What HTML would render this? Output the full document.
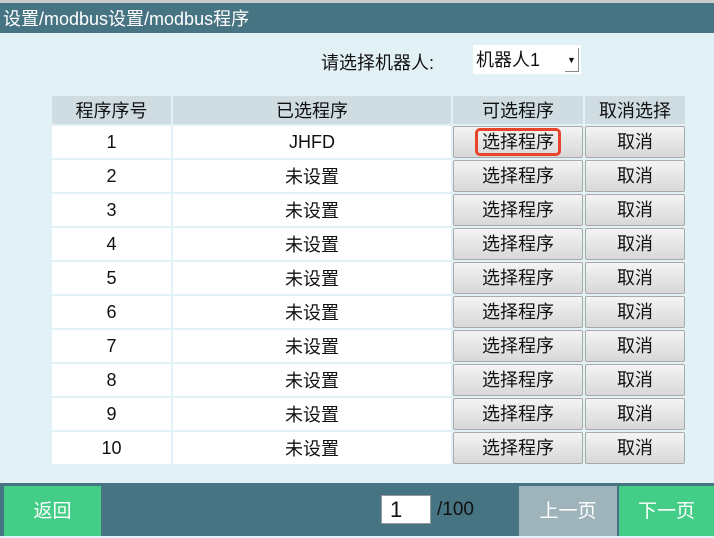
<!DOCTYPE html><html><head><meta charset="utf-8"><style>
*{margin:0;padding:0;box-sizing:border-box}
body{width:714px;height:536px;overflow:hidden;background:#e1f1f6;font-family:"Liberation Sans","Noto Sans CJK SC",sans-serif;position:relative;color:#111}
.a{position:absolute}
.hdr{left:0;top:3px;width:714px;height:30px;background:#477483;color:#fff;font-size:18px;line-height:32px;padding-left:3px}
table{position:absolute;left:52px;top:96px;border-collapse:separate;border-spacing:2px;margin:-2px}
td{height:32px;text-align:center;font-size:18px;background:#fff;padding:0}
tr.h td{background:#cfdde2;height:28px}
td.b{background:transparent;padding:0}
.btn{height:32px;border:1px solid #aaa;border-radius:2px;background:linear-gradient(#f4f4f4,#d8d8d8);line-height:31px;font-size:18px}
.foot{left:0;top:483px;width:714px;height:53px;background:#477483}
.g{background:#43cd86;color:#fff;font-size:19px;text-align:center;line-height:52px}
</style></head><body>
<div class="a" style="left:0;top:0;width:714px;height:3px;background:#ccc"></div>
<div class="a hdr">设置/modbus设置/modbus程序</div>
<div class="a" style="left:321px;top:49px;font-size:18px">请选择机器人:</div>
<div class="a" style="left:473px;top:45px;width:108px;height:29px;background:#fff;font-size:18px;line-height:30px;padding-left:3px">机器人1<span class="a" style="right:2px;top:3px;width:14px;height:24px;border-right:1px solid #888;border-bottom:1px solid #888;font-size:9px;line-height:24px;text-align:center">▼</span></div>
<table>
<tr class="h"><td style="width:119px">程序序号</td><td style="width:278px">已选程序</td><td style="width:130px">可选程序</td><td style="width:100px">取消选择</td></tr>
<tr><td>1</td><td>JHFD</td><td class="b"><div class="btn"><span style="border:3px solid #e8442c;border-radius:5px;padding:0 4px;display:inline-block;line-height:22px">选择程序</span></div></td><td class="b"><div class="btn">取消</div></td></tr>
<tr><td>2</td><td>未设置</td><td class="b"><div class="btn">选择程序</div></td><td class="b"><div class="btn">取消</div></td></tr>
<tr><td>3</td><td>未设置</td><td class="b"><div class="btn">选择程序</div></td><td class="b"><div class="btn">取消</div></td></tr>
<tr><td>4</td><td>未设置</td><td class="b"><div class="btn">选择程序</div></td><td class="b"><div class="btn">取消</div></td></tr>
<tr><td>5</td><td>未设置</td><td class="b"><div class="btn">选择程序</div></td><td class="b"><div class="btn">取消</div></td></tr>
<tr><td>6</td><td>未设置</td><td class="b"><div class="btn">选择程序</div></td><td class="b"><div class="btn">取消</div></td></tr>
<tr><td>7</td><td>未设置</td><td class="b"><div class="btn">选择程序</div></td><td class="b"><div class="btn">取消</div></td></tr>
<tr><td>8</td><td>未设置</td><td class="b"><div class="btn">选择程序</div></td><td class="b"><div class="btn">取消</div></td></tr>
<tr><td>9</td><td>未设置</td><td class="b"><div class="btn">选择程序</div></td><td class="b"><div class="btn">取消</div></td></tr>
<tr><td>10</td><td>未设置</td><td class="b"><div class="btn">选择程序</div></td><td class="b"><div class="btn">取消</div></td></tr>
</table>
<div class="a foot"></div>
<div class="a g" style="left:4px;top:486px;width:97px;height:50px">返回</div>
<div class="a" style="left:381px;top:495px;width:50px;height:29px;background:#fff;border:1px solid #999;font-size:22px;line-height:27px;padding-left:8px">1</div>
<div class="a" style="left:437px;top:499px;font-size:19px;color:#111">/100</div>
<div class="a g" style="left:519px;top:486px;width:98px;height:50px;background:#9eb4ba">上一页</div>
<div class="a g" style="left:619px;top:486px;width:95px;height:50px">下一页</div>
</body></html>
